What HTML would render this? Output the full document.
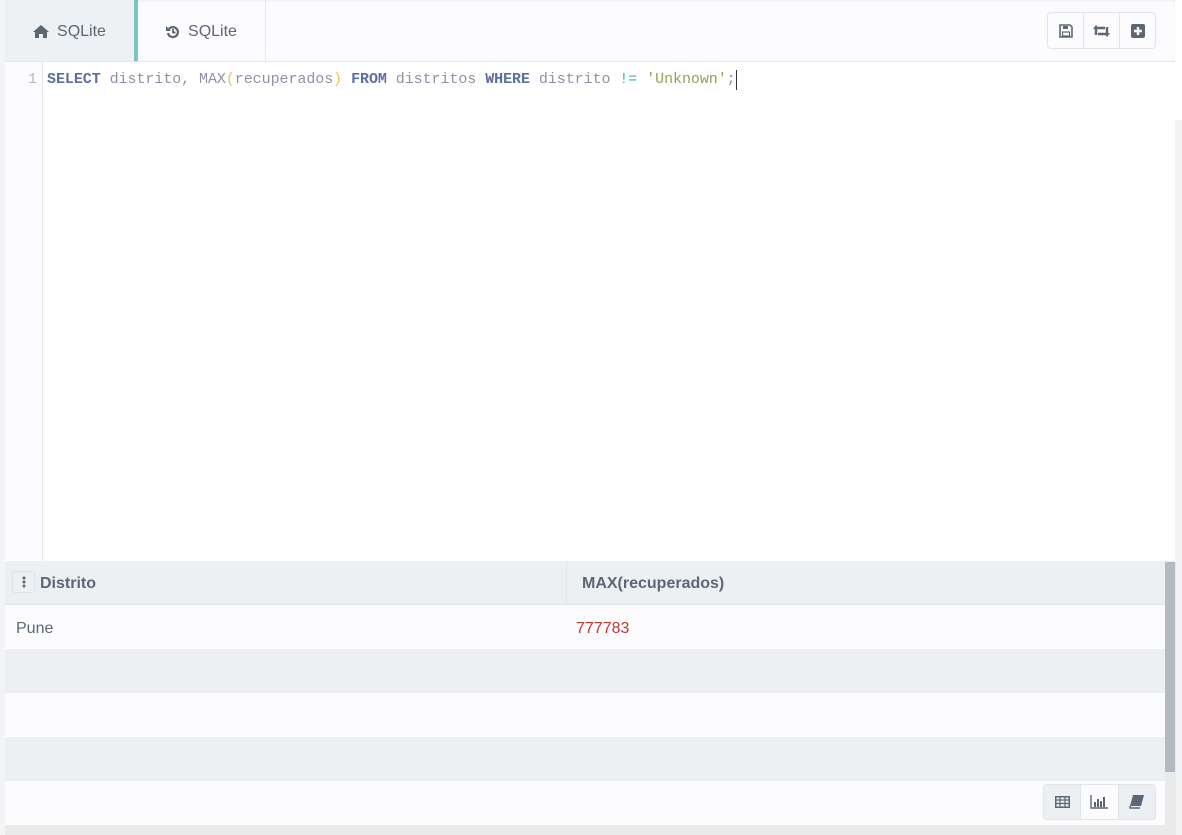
<!DOCTYPE html>
<html><head><style>
*{margin:0;padding:0;box-sizing:border-box}
body{width:1182px;height:835px;background:#f3f4f6;font-family:"Liberation Sans",sans-serif;position:relative;overflow:hidden}
.abs{position:absolute}
.tabs{left:5px;top:0;width:1170px;height:62px;background:#fcfbfe;border-bottom:1px solid #e6e6ea;box-shadow:0 1px 2px rgba(0,0,0,.06) inset}
.tab{top:0;height:61px;display:flex;align-items:center;justify-content:center;font-size:16px;color:#5b6774;gap:8px;padding-top:2px}
.btns{left:1047px;top:12px;width:109px;height:37px;border:1px solid #e3e3e8;border-radius:4px;background:#fcfbfe;display:flex}
.btns div{flex:1;border-right:1px solid #e3e3e8;display:flex;align-items:center;justify-content:center}
.btns div:last-child{border:none}
.editor{left:5px;top:62px;width:1170px;height:499px;background:#fff}
.gutter{left:0;top:0;width:38px;height:499px;background:#fcfbfe;border-right:1px solid #e6e6ea}
.code{font-family:"Liberation Mono",monospace;font-size:15px;white-space:pre;color:#8c93a6;letter-spacing:-0.06px}
.kw{color:#5d6ea0;font-weight:bold}
.row{left:5px;width:1160px;height:44px;font-size:16px;color:#5b6774;display:flex;align-items:center;padding-top:3px}
</style></head><body>
<div class="abs" style="left:1175px;top:0;width:7px;height:120px;background:#fff"></div>
<div class="abs tabs"></div>
<div class="abs tab" style="left:5px;width:129px;background:#edf1f3"><svg width="16" height="13" viewBox="0 0 16 13"><path d="M8 0L0 7h2v6h4V9h4v4h4V7h2z" fill="#5b6774"/></svg>SQLite</div>
<div class="abs" style="left:134px;top:0;width:4px;height:61px;background:#7cc3c3"></div>
<div class="abs tab" style="left:138px;width:128px;border-right:1px solid #e6e6ea"><svg width="14" height="14" viewBox="0 0 14 14"><path d="M3 4A5 5 0 1 1 2 8" stroke="#5b6774" stroke-width="2.2" fill="none"/><path d="M0 1v5h5z" fill="#5b6774"/><path d="M7 4v3.5h2.5" stroke="#5b6774" stroke-width="1.8" fill="none"/></svg>SQLite</div>
<div class="abs btns">
<div><svg width="14" height="14" viewBox="0 0 14 14"><path d="M1 1h10l2 2v10H1z" fill="none" stroke="#5b6774" stroke-width="1.6"/><rect x="4" y="2" width="5" height="3" fill="#5b6774"/><rect x="3.5" y="8" width="7" height="4" fill="none" stroke="#5b6774" stroke-width="1.2"/></svg></div>
<div><svg width="17" height="12" viewBox="0 0 17 12"><path d="M3 10V3h9M14 2v7H5" stroke="#5b6774" stroke-width="2.4" fill="none"/><path d="M0 4l3-4 3 4zM11 8l3 4 3-4z" fill="#5b6774"/></svg></div>
<div><svg width="14" height="14" viewBox="0 0 14 14"><rect width="14" height="14" rx="2" fill="#5b6774"/><path d="M7 3v8M3 7h8" stroke="#fff" stroke-width="2.4"/></svg></div>
</div>
<div class="abs editor">
<div class="abs gutter"><div class="code" style="position:absolute;right:5px;top:9px;color:#b5b9c2">1</div></div>
<div class="abs code" style="left:42px;top:9px"><span class="kw">SELECT</span> distrito, MAX<span style="color:#f0c451">(</span>recuperados<span style="color:#f0c451">)</span> <span class="kw">FROM</span> distritos <span class="kw">WHERE</span> distrito <span style="color:#3ab0c4">!=</span> <span style="color:#8fa55a">'Unknown'</span>;</div>
<div class="abs" style="left:731px;top:8px;width:1px;height:20px;background:#333"></div>
</div>
<div class="abs row" style="top:561px;height:44px;background:#edf0f2;border-bottom:1px solid #e3e3e8;font-weight:bold">
<div class="abs" style="left:7px;top:10px;width:23px;height:22px;border:1px solid #e0e3e6;border-radius:3px;display:flex;align-items:center;justify-content:center"><svg width="4" height="12"><circle cx="2" cy="2" r="1.5" fill="#5b6774"/><circle cx="2" cy="6" r="1.5" fill="#5b6774"/><circle cx="2" cy="10" r="1.5" fill="#5b6774"/></svg></div>
<span class="abs" style="left:35px">Distrito</span>
<div class="abs" style="left:561px;top:0;width:1px;height:43px;background:#e3e3e8"></div>
<span class="abs" style="left:577px">MAX(recuperados)</span></div>
<div class="abs row" style="top:605px;background:#fcfbfe"><span class="abs" style="left:11px">Pune</span><span class="abs" style="left:571px;color:#c0392b">777783</span></div>
<div class="abs row" style="top:649px;background:#edf0f2"></div>
<div class="abs row" style="top:693px;background:#fcfbfe"></div>
<div class="abs row" style="top:737px;background:#edf0f2"></div>
<div class="abs row" style="top:781px;height:44px;background:#fcfbfe"></div>
<div class="abs" style="left:1165px;top:561px;width:11px;height:274px;background:#eaeaea"></div>
<div class="abs" style="left:1165px;top:562px;width:10px;height:210px;background:#b3bac3"></div>
<div class="abs" style="left:5px;top:825px;width:1160px;height:10px;background:#eaeaea"></div>
<div class="abs" style="left:1043px;top:784px;width:113px;height:36px;border:1px solid #e3e3e8;border-radius:4px;display:flex;overflow:hidden">
<div style="flex:1;background:#edf0f2;display:flex;align-items:center;justify-content:center"><svg width="15" height="12" viewBox="0 0 15 12"><rect x=".75" y=".75" width="13.5" height="10.5" fill="none" stroke="#5b6774" stroke-width="1.5"/><path d="M1 4h13M1 7.5h13M5 1v10M10 1v10" stroke="#5b6774" stroke-width="1.2"/></svg></div>
<div style="flex:1;background:#fcfbfe;border-left:1px solid #e3e3e8;border-right:1px solid #e3e3e8;display:flex;align-items:center;justify-content:center"><svg width="18" height="14" viewBox="0 0 18 14"><path d="M1 0v13h17" stroke="#5b6774" stroke-width="1.4" fill="none"/><path d="M5 7v5M8 4v8M11 6v6M14 2v10" stroke="#5b6774" stroke-width="2"/></svg></div>
<div style="flex:1;background:#edf0f2;display:flex;align-items:center;justify-content:center"><svg width="15" height="14" viewBox="0 0 15 14"><path d="M4 0h11l-3 11H1z" fill="#5b6774"/><path d="M1 11v2h10" stroke="#5b6774" stroke-width="1.4" fill="none"/></svg></div>
</div>
</body></html>
